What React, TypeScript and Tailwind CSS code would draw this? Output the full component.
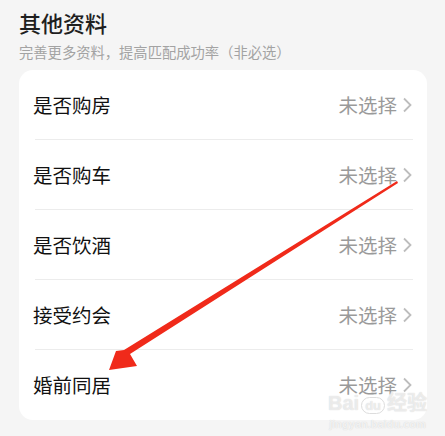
const rows = ['是否购房', '是否购车', '是否饮酒', '接受约会', '婚前同居']

const font = { fontFamily: '"Noto Sans CJK SC", "Noto Sans", sans-serif' }

function Chevron() {
  return (
    <svg width="12" height="16" viewBox="0 0 12 16" className="ml-[4px]">
      <path d="M3 1.5 L9.5 8 L3 14.5" fill="none" stroke="#bdbdbd" strokeWidth="1.8" />
    </svg>
  )
}

export default function App() {
  return (
    <div
      className="relative w-[445px] h-[436px] overflow-hidden bg-[#f5f5f5] pl-[19px] pr-[18px] pt-[6px]"
      style={font}
    >
      <div className="text-[22px] leading-[32px] font-medium text-[#1f1f1f]">其他资料</div>
      <div className="mt-[4px] text-[14.3px] leading-[20px] text-[#a3a3a3]">完善更多资料，提高匹配成功率（非必选）</div>

      <div className="mt-[8px] rounded-[14px] bg-white pl-[14px] pr-[14px]">
        {rows.map((label, i) => (
          <div
            key={label}
            className={`flex h-[70px] items-center justify-between ${i < rows.length - 1 ? 'ml-[2px] border-b border-[#ececec]' : ''}`}
          >
            <span className={`text-[19.5px] text-[#111] ${i < rows.length - 1 ? '-ml-[2px]' : ''}`}>{label}</span>
            <span className="flex items-center text-[19.5px] text-[#9a9a9a]">
              未选择
              <Chevron />
            </span>
          </div>
        ))}
      </div>

      {/* annotation arrow */}
      <svg className="absolute left-0 top-0 pointer-events-none" width="445" height="436">
        <polygon
          points="397,181 398,183 130,354 137,366 109,370 116,351 124,350"
          fill="#f02a1a"
        />
      </svg>

      {/* watermark */}
      <div
        className="absolute left-[328px] top-[391px] pointer-events-none select-none text-center"
        style={{ fontFamily: '"Liberation Sans", sans-serif' }}
      >
        <div className="text-[20px] leading-[22px] font-bold text-white/60 [text-shadow:0_0_1px_#ccc]">
          Bai<span className="mx-[2px] rounded-full border border-[#ddd] px-[3px] text-[13px]">du</span>
          <span style={font}>经验</span>
        </div>
        <div className="text-[11px] leading-[14px] font-bold text-white/70 [text-shadow:0_0_1px_#ccc]">jingyan.baidu.com</div>
      </div>
    </div>
  )
}
